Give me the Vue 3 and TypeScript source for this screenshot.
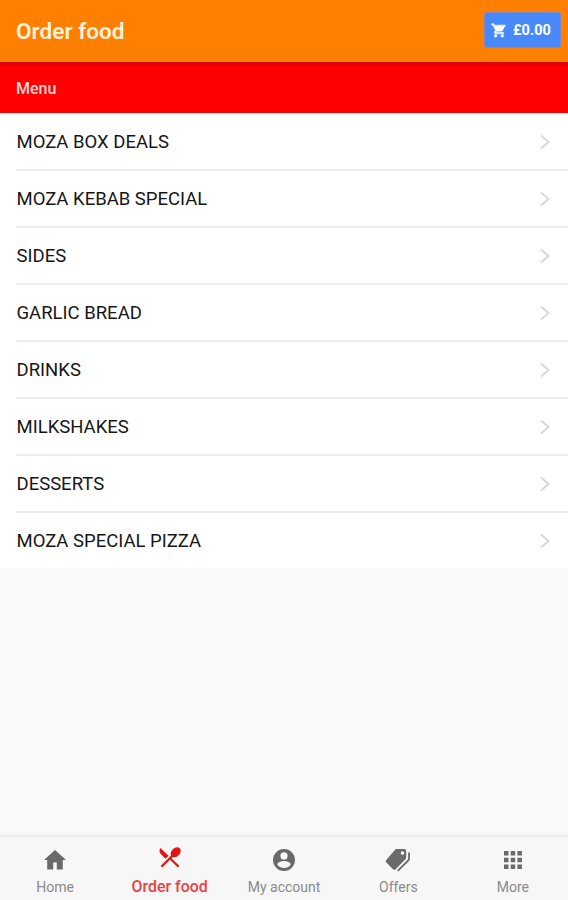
<script setup lang="ts">
interface Tab {
  id: string
  label: string
}

const categories: string[] = [
  'MOZA BOX DEALS',
  'MOZA KEBAB SPECIAL',
  'SIDES',
  'GARLIC BREAD',
  'DRINKS',
  'MILKSHAKES',
  'DESSERTS',
  'MOZA SPECIAL PIZZA',
]

const tabs: Tab[] = [
  { id: 'home', label: 'Home' },
  { id: 'order', label: 'Order food' },
  { id: 'account', label: 'My account' },
  { id: 'offers', label: 'Offers' },
  { id: 'more', label: 'More' },
]

const activeTab = 'order'
</script>

<template>
  <div class="screen">
    <header class="toolbar">
      <h1 class="title">Order food</h1>
      <button class="basket" type="button">
        <svg class="cart" viewBox="0 0 24 24">
          <path d="M7 18c-1.100 0-2 .9-2 2s.9 2 2 2 2-.9 2-2-.9-2-2-2zM1 2v2h2l3.600 7.590-1.350 2.450C4.520 15.370 5.480 17 7 17h12v-2H7.420c-.14 0-.25-.11-.25-.25l.93-1.750h7.450c.75 0 1.410-.41 1.750-1.030L21.700 4H5.210l-.94-2H1zm16 16c-1.100 0-2 .9-2 2s.9 2 2 2 2-.9 2-2-.9-2-2-2z" />
        </svg>
        <span>£0.00</span>
      </button>
    </header>
    <div class="section"><span>Menu</span></div>
    <ul class="list">
      <li v-for="name in categories" :key="name" class="item">
        <span class="name">{{ name }}</span>
        <svg class="chevron" viewBox="0 0 10 16"><path d="M1 1.500L8.500 8 1 14.500" /></svg>
      </li>
    </ul>
    <main class="empty"></main>
    <nav class="tabs">
      <div v-for="tab in tabs" :key="tab.id" class="tab" :class="{ active: tab.id === activeTab }">
        <svg v-if="tab.id === 'home'" class="icon" viewBox="0 0 24 24">
          <path d="M12 2L1 12h3.200v9.500h6v-7h3.600v7h6V12H23z" />
        </svg>
        <svg v-else-if="tab.id === 'order'" class="icon raised" viewBox="0 0 24 24">
          <path d="M2.300 2C1 4.300 1.300 6.600 3.200 8.500l4.300 4.200 3.100-3z" />
          <path d="M14.500 10.900c1.800.8 4.200.2 6.100-1.700 2.300-2.300 2.800-5.400 1.200-7-1.700-1.600-4.800-1.100-7.100 1.200-1.900 1.900-2.500 4.300-1.600 6.100L2.600 20l1.600 1.600L12 13.800l7.800 7.800 1.600-1.600-7.800-7.800z" />
        </svg>
        <svg v-else-if="tab.id === 'account'" class="icon" viewBox="0 0 24 24">
          <path fill-rule="evenodd" d="M12 1a11 11 0 1 0 0 22 11 11 0 0 0 0-22zm0 3.300a3.600 3.600 0 1 1 0 7.200 3.600 3.600 0 0 1 0-7.200zm0 15.800c-2.800 0-5.300-1.400-6.700-3.600 0-2.200 4.500-3.400 6.700-3.400s6.700 1.200 6.700 3.400a8 8 0 0 1-6.700 3.600z" />
        </svg>
        <svg v-else-if="tab.id === 'offers'" class="icon wide" viewBox="0 0 26 24">
          <path fill-rule="evenodd" d="M11.600 1H19c1.300 0 2.200.9 2.200 2.200v6.300c0 .8-.3 1.300-.8 1.800L10.600 21.200c-.8.800-1.800.8-2.600 0l-6.700-6.700c-.8-.8-.8-1.800 0-2.600L10 1.700c.5-.5 1-.7 1.600-.7zm5.900 2.300a1.800 1.800 0 1 0 0 3.600 1.800 1.800 0 0 0 0-3.600z" />
          <path class="outline" d="M24 4.500v6.200c0 .8-.3 1.300-.8 1.800L12.700 22.800" />
        </svg>
        <svg v-else class="icon" viewBox="0 0 24 24">
          <path d="M3 3h4.500v4.500H3zM9.700 3h4.500v4.500H9.700zM16.400 3h4.500v4.500h-4.500zM3 9.700h4.500v4.500H3zM9.700 9.700h4.500v4.500H9.700zM16.400 9.700h4.500v4.500h-4.500zM3 16.400h4.500v4.500H3zM9.700 16.400h4.500v4.500H9.700zM16.400 16.400h4.500v4.500h-4.500z" />
        </svg>
        <span class="label">{{ tab.label }}</span>
      </div>
    </nav>
  </div>
</template>

<style>
body {
  margin: 0;
}
</style>

<style scoped>
.screen {
  display: flex;
  flex-direction: column;
  height: 900px;
  overflow: hidden;
  background: #f9f9f9;
  font-family: Roboto, sans-serif;
}
.toolbar {
  display: flex;
  flex: none;
  align-items: center;
  justify-content: space-between;
  box-sizing: border-box;
  height: 62px;
  padding: 0 7px 2px 16px;
  background: #ff8000;
}
.title {
  margin: 0;
  padding-top: 2px;
  color: #fff3df;
  font-size: 22.500px;
  font-weight: 600;
  letter-spacing: 0.05px;
  line-height: 30px;
}
.basket {
  display: flex;
  align-items: center;
  box-sizing: border-box;
  width: 77px;
  height: 36px;
  gap: 6px;
  padding: 1px 0 0 6px;
  border: 1px solid #7c86cc;
  border-radius: 3px;
  background: #4788fb;
  color: #fff;
  font: 700 14.500px Roboto, sans-serif;
}
.cart {
  flex: none;
  width: 16px;
  height: 17px;
  fill: #fff;
  stroke: #fff;
  stroke-width: 0.8;
}
.section {
  display: flex;
  flex: none;
  align-items: center;
  box-sizing: border-box;
  height: 51px;
  padding: 2px 16px 0;
  background: linear-gradient(#c90800 0, #ec0000 2px, #f00 5px);
  color: #ffd6d6;
  font-size: 16px;
  font-weight: 500;
}
.list {
  flex: none;
  margin: 0;
  padding: 1px 0 0;
  list-style: none;
  background: #fff;
}
.item {
  display: flex;
  align-items: center;
  justify-content: space-between;
  box-sizing: border-box;
  height: 57px;
  margin-left: 16px;
  padding: 1px 18px 0 0.5px;
  border-bottom: 2px solid #ebebeb;
}
.item:last-child {
  height: 55px;
  border-bottom: 0;
}
.name {
  color: #161616;
  font-size: 18.500px;
  line-height: 24px;
}
.chevron {
  width: 10px;
  height: 16px;
  fill: none;
  stroke: #d8d8d8;
  stroke-width: 2;
}
.empty {
  flex: 1;
}
.tabs {
  display: flex;
  flex: none;
  box-sizing: border-box;
  height: 65px;
  margin: 0 -2px;
  border-top: 2px solid #ececec;
  background: #f7f7f7;
}
.tab {
  display: flex;
  flex: 1;
  flex-direction: column;
  align-items: center;
  padding-top: 11px;
  color: #8a8a8a;
  font-size: 14px;
}
.icon {
  width: 24px;
  height: 24px;
  fill: #6a6a6a;
}
.raised {
  margin-top: -2px;
  margin-bottom: 2px;
}
.wide {
  width: 26px;
}
.outline {
  fill: none;
  stroke: #6a6a6a;
  stroke-width: 1.800;
}
.label {
  margin-top: 6px;
  line-height: 18px;
  white-space: nowrap;
}
.active {
  color: #ec3f45;
  font-size: 15.900px;
  font-weight: 500;
}
.active .icon {
  fill: #e01616;
}
</style>
